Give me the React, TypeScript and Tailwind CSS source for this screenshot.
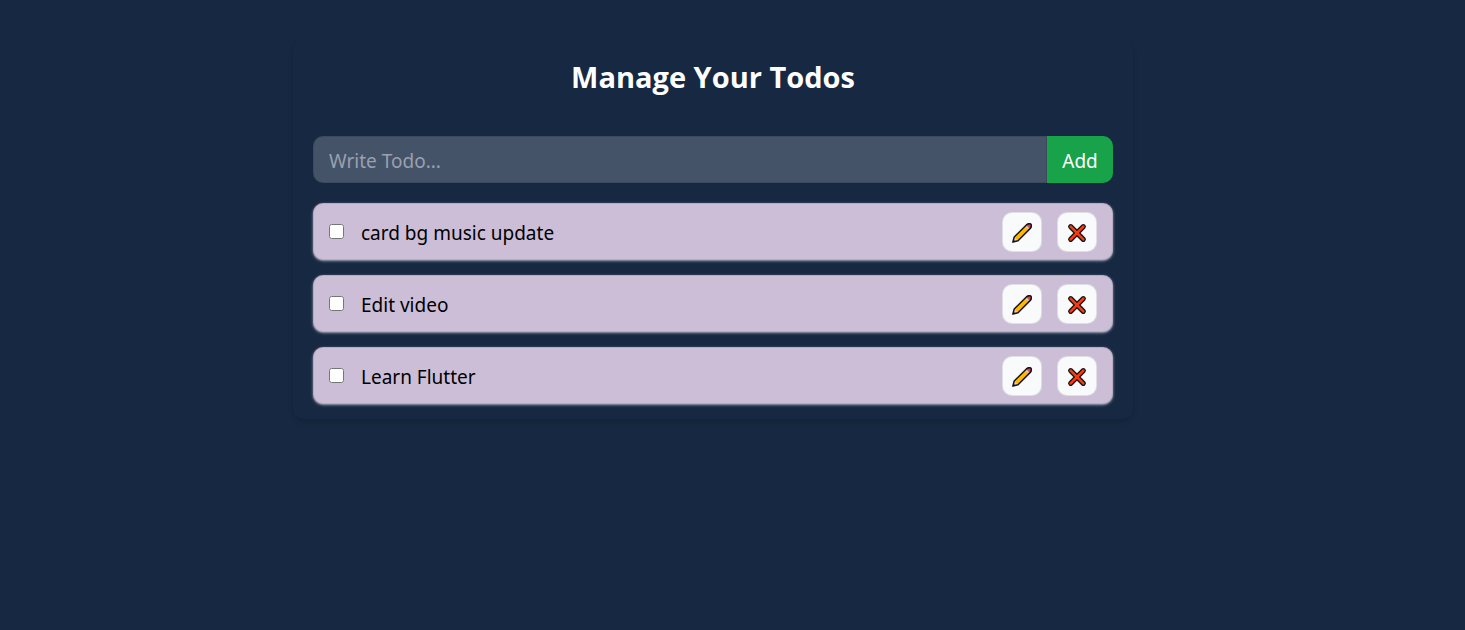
import { FormEvent, useState } from "react";

type Todo = { id: number; text: string; done: boolean };

const initialTodos: Todo[] = [
  { id: 1, text: "card bg music update", done: false },
  { id: 2, text: "Edit video", done: false },
  { id: 3, text: "Learn Flutter", done: false },
];

function PencilIcon() {
  return (
    <svg viewBox="0 0 20 20" className="size-5" aria-hidden="true">
      <path d="M.9 19.1 2.2 14 14.6 1.7Q16.8-.1 18.9 1.1 20.1 3.3 18.3 5.4L6 17.8Z" fill="#fdb60a" />
      <path d="M1 19 2.3 14 6 17.7Z" fill="#e8d0c0" />
      <path d="M12.9 3.4 14.4 1.9 18.1 5.6 16.6 7.1Z" fill="#c9c6c8" />
      <path d="M14.2 2.1Q16.8-.1 18.9 1.1 20.1 3.3 17.9 5.8Z" fill="#e8384f" />
      <path
        d="M.9 19.1 2.2 14 14.6 1.7Q16.8-.1 18.9 1.1 20.1 3.3 18.3 5.4L6 17.8Z"
        fill="none"
        stroke="#171515"
        strokeWidth="1.5"
        strokeLinejoin="round"
      />
      <path d="M.4 19.6 1.4 16.6 3.4 18.6Z" fill="#171515" />
    </svg>
  );
}

function CrossIcon() {
  return (
    <svg viewBox="0 0 20 20" className="size-5" aria-hidden="true" fill="none" strokeLinecap="round">
      <path d="M3.7 3.7 16.3 16.3M16.3 3.7 3.7 16.3" stroke="#171515" strokeWidth="5.2" />
      <path d="M3.7 3.7 16.3 16.3M16.3 3.7 3.7 16.3" stroke="#f73a14" strokeWidth="2.6" />
    </svg>
  );
}

const actionClass =
  "flex size-10 shrink-0 items-center justify-center rounded-[10px] border border-black/10 bg-gray-50 pt-0.5 hover:bg-gray-100";

export default function App() {
  const [todos, setTodos] = useState(initialTodos);
  const [draft, setDraft] = useState("");
  const [editing, setEditing] = useState<number | null>(null);

  const add = (event: FormEvent) => {
    event.preventDefault();
    if (!draft.trim()) return;
    setTodos([{ id: Date.now(), text: draft.trim(), done: false }, ...todos]);
    setDraft("");
  };

  const update = (id: number, change: Partial<Todo>) =>
    setTodos(todos.map((todo) => (todo.id === id ? { ...todo, ...change } : todo)));

  return (
    <main className="min-h-screen bg-[#172842] py-10 pr-[39px] font-['Noto_Sans',sans-serif] text-[19px] leading-[30px]">
      <div className="mx-auto w-full max-w-[840px] rounded-[10px] px-5 pt-[17px] pb-[15px] text-white shadow-md">
        <h1 className="mb-[39px] text-center font-['Open_Sans',sans-serif] text-[29px] leading-10 font-bold">
          Manage Your Todos
        </h1>
        <form onSubmit={add} className="mb-5 flex">
          <input
            type="text"
            aria-label="New todo"
            placeholder="Write Todo..."
            value={draft}
            onChange={(event) => setDraft(event.target.value)}
            className="h-[47px] min-w-0 flex-1 rounded-l-[10px] border border-black/10 bg-[#455368] px-[15px] pt-0.5 outline-none placeholder:text-gray-400"
          />
          <button type="submit" className="w-[66px] shrink-0 rounded-r-[10px] bg-[#18a34a] pt-0.5">
            Add
          </button>
        </form>
        <ul className="flex flex-col gap-[15px]">
          {todos.map((todo) => (
            <li
              key={todo.id}
              className="flex h-[57px] items-center gap-[15px] rounded-[10px] border border-black/10 bg-[#ccbed7] px-[15px] text-black shadow-sm shadow-white/50"
            >
              <input
                type="checkbox"
                aria-label={`Mark ${todo.text} as done`}
                checked={todo.done}
                onChange={() => update(todo.id, { done: !todo.done })}
                className="size-[15px] shrink-0"
              />
              <input
                type="text"
                aria-label="Todo text"
                value={todo.text}
                readOnly={editing !== todo.id}
                onChange={(event) => update(todo.id, { text: event.target.value })}
                className="min-w-0 flex-1 border border-transparent bg-transparent pt-0.5 pl-px outline-none"
              />
              <button
                type="button"
                aria-label="Edit todo"
                onClick={() => setEditing(editing === todo.id ? null : todo.id)}
                className={actionClass}
              >
                <PencilIcon />
              </button>
              <button
                type="button"
                aria-label="Delete todo"
                onClick={() => setTodos(todos.filter((item) => item.id !== todo.id))}
                className={actionClass}
              >
                <CrossIcon />
              </button>
            </li>
          ))}
        </ul>
      </div>
    </main>
  );
}
